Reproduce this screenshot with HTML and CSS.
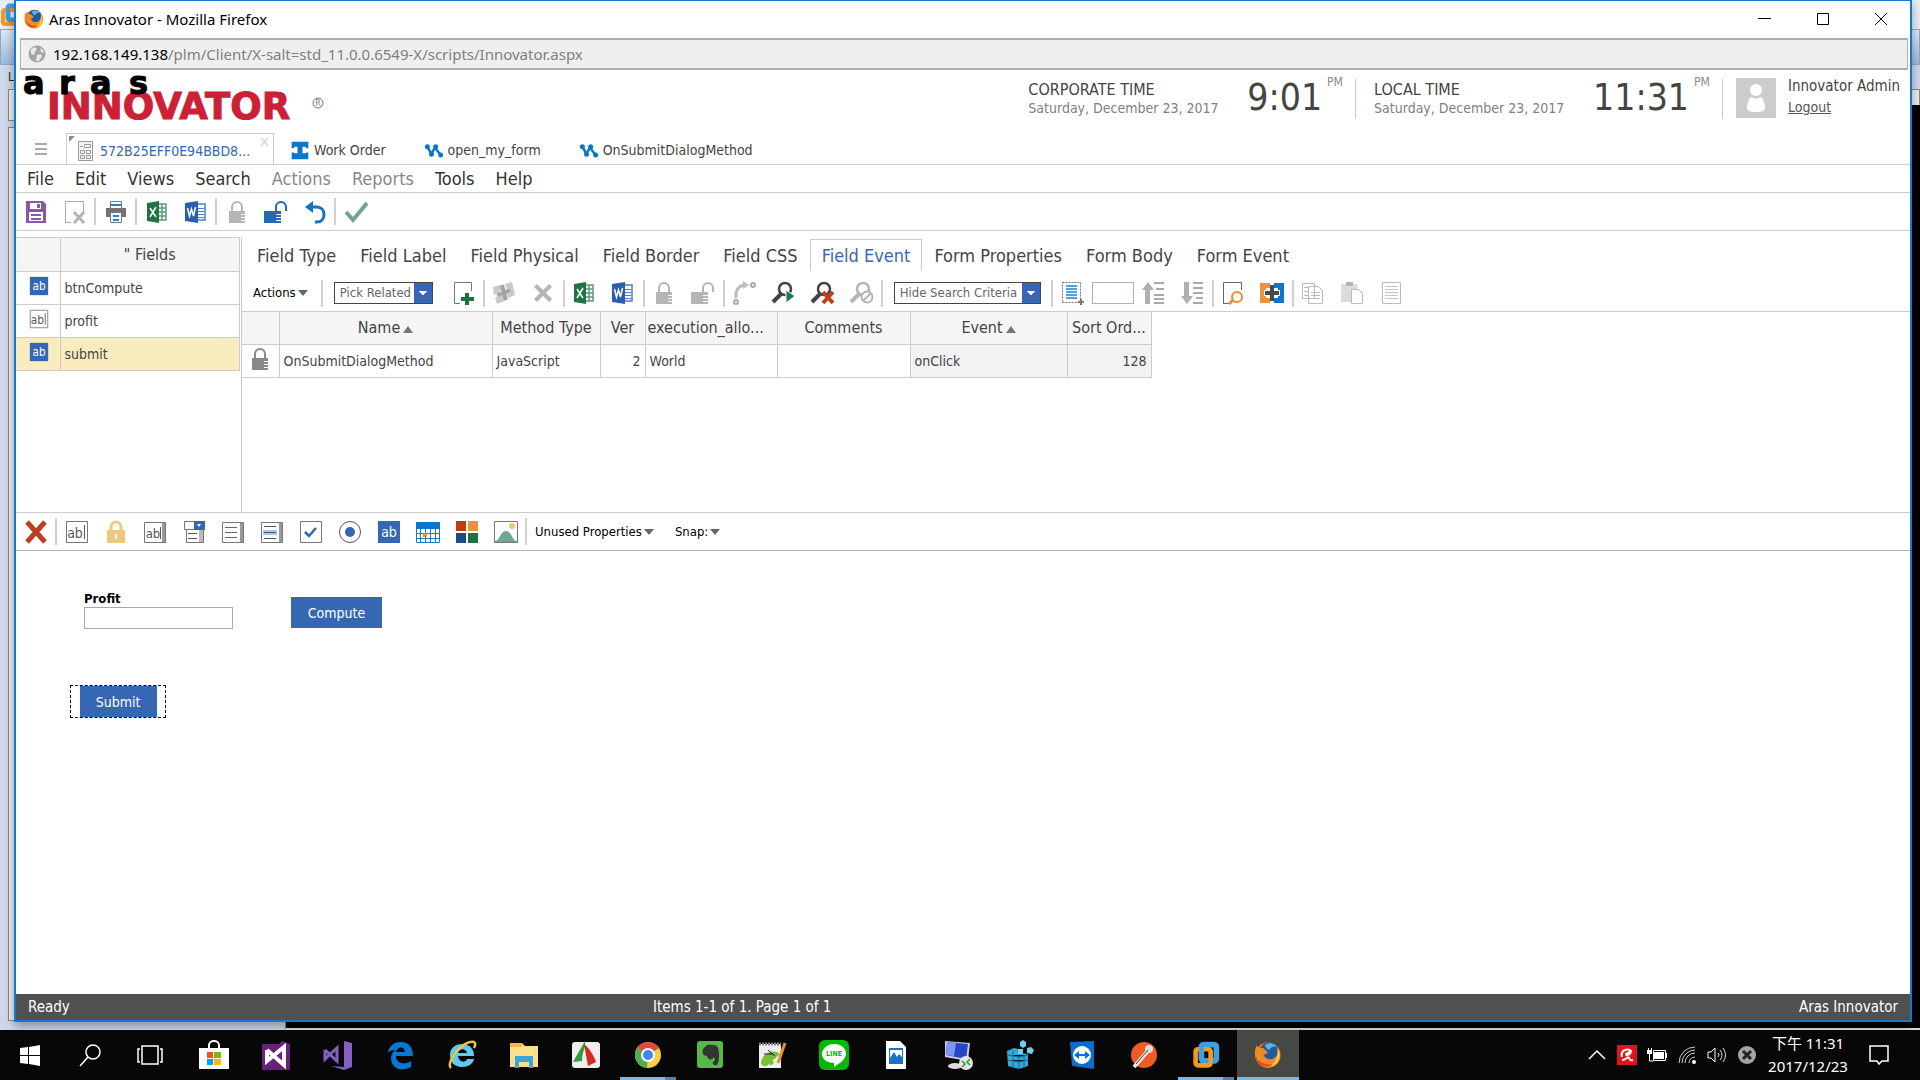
FILE: index.html
```html
<!DOCTYPE html>
<html lang="en">
<head>
<meta charset="utf-8">
<title>Aras Innovator</title>
<link rel="stylesheet" href="styles.css">
</head>
<body>
<svg class="defs" aria-hidden="true">
  <symbol id="i-save" viewBox="0 0 24 24"><path fill="#8a57a6" d="M2 1h17l3 3v19H2z"/><path fill="#fff" d="M6 3h11v6H6zM5 12h14v9H5z"/><path fill="#8a57a6" d="M13 4h3v4h-3zM7 14h10v2H7zM7 18h10v2H7z"/></symbol>
  <symbol id="i-docx" viewBox="0 0 24 24"><path fill="none" stroke="#aaa" d="M20.500 12V1.500h-18v21H8"/><path stroke="#b5b5b5" stroke-width="3" d="M11 12l10 11M21 12L11 23"/></symbol>
  <symbol id="i-print" viewBox="0 0 24 24"><path fill="#fff" stroke="#777" d="M6.500 1.500h11v7h-11z"/><path stroke="#1a8ad4" stroke-width="2" d="M7 5h10"/><path fill="#737373" d="M2 8h20v9H2z"/><path fill="#fff" stroke="#777" d="M6.500 12.500h11v10h-11z"/><path stroke="#1a8ad4" stroke-width="2" d="M9 16h6M9 20h6"/></symbol>
  <symbol id="i-excel" viewBox="0 0 24 24"><path fill="none" stroke="#5d9b78" stroke-width="1.500" d="M13 4h8v16h-8M13 8h8M13 12h8M13 16h8M17 4v16"/><path fill="#217346" d="M2 3l12-2v22L2 21z"/><path stroke="#fff" stroke-width="1.500" d="M5 8l6 9M11 7l-6 10"/></symbol>
  <symbol id="i-word" viewBox="0 0 24 24"><path fill="#fff" stroke="#4e7dc4" stroke-width="1.500" d="M13 4h8v16h-8z"/><path stroke="#4e7dc4" d="M14 8.500h6M14 11.500h6M14 14.500h6M14 17.500h6"/><path fill="#2b5eab" d="M1 3l13-2v22L1 21z"/><path fill="none" stroke="#fff" stroke-width="1.500" d="M3.500 8l2 8 2-7 2 7 2-9"/></symbol>
  <symbol id="i-lock" viewBox="0 0 24 24"><path fill="none" stroke="currentColor" stroke-width="2" d="M7 12V7a5 5 0 0 1 10 0v5"/><path fill="currentColor" d="M4 11h16v3h-4v1h4v2h-4v1h4v2h-4v1h4v2H4z"/></symbol>
  <symbol id="i-unlock" viewBox="0 0 24 24"><path fill="none" stroke="currentColor" stroke-width="2" d="M12 12V7a5 5 0 0 1 10 0v4"/><path fill="currentColor" d="M0 11h17v3h-5v1h5v2h-5v1h5v2h-5v1h5v2H0z"/></symbol>
  <symbol id="i-undo" viewBox="0 0 24 24"><path fill="none" stroke="#0f74c6" stroke-width="3" d="M6 7h8c4 0 7 3 7 7.500S18 22 14 22h-2"/><path fill="#0f74c6" d="M2 7l8-6v12z"/></symbol>
  <symbol id="i-check" viewBox="0 0 24 24"><path fill="none" stroke="#6fa592" stroke-width="4" d="M2 12l7 8L23 3"/></symbol>
  <symbol id="i-form" viewBox="0 0 20 20"><path fill="#f4f4f4" stroke="#999" d="M2.500.5h14v19h-14z"/><path fill="none" stroke="#999" d="M8.500 3.500h6v3h-6zM4.500 9.500h4v3h-4zM10.500 9.500h4v3h-4zM4.500 14.500h4v3h-4zM10.500 14.500h4v3h-4zM4 5.500h3"/></symbol>
  <symbol id="i-work" viewBox="0 0 24 24"><path fill="#0b77cb" d="M2 2h20v8h-3V8h-4v8h4v-1h3v8H2v-8h3v1h4V8H5v2H2z"/></symbol>
  <symbol id="i-method" viewBox="0 0 24 24"><path fill="none" stroke="#0b77cb" stroke-width="3" d="M4 8l5 9 4-8 7 9"/><g fill="#0b77cb"><circle cx="4" cy="8" r="3"/><circle cx="9" cy="17" r="3"/><circle cx="14" cy="8" r="3"/><circle cx="20" cy="18" r="3"/></g></symbol>
  <symbol id="i-ab" viewBox="0 0 24 24"><path fill="#3567b3" d="M1 1h22v22H1z"/><text x="12" y="17" text-anchor="middle" font-size="14" fill="#fff">ab</text></symbol>
  <symbol id="i-abl" viewBox="0 0 24 24"><path fill="#fff" stroke="#777" d="M1.500 1.500h21v21h-21z"/><text x="10" y="18" text-anchor="middle" font-size="14" fill="#555">ab</text><path stroke="#555" d="M19.500 5v14"/></symbol>
  <symbol id="i-area" viewBox="0 0 24 24"><path fill="#fff" stroke="#777" d="M1.500 2.500h21v20h-21z"/><text x="10" y="18" text-anchor="middle" font-size="13" fill="#555">ab</text><path fill="#999" d="M19 3h3v19h-3z"/><path stroke="#555" d="M17.500 7v12"/></symbol>
  <symbol id="i-goldlock" viewBox="0 0 24 24"><path fill="none" stroke="#efcb82" stroke-width="3" d="M7 12V7a5 5 0 0 1 10 0v5"/><path fill="#efc77c" d="M3 10h18v13H3z"/><path fill="#fff" d="M11 14h2v5h-2z"/></symbol>
  <symbol id="i-combo" viewBox="0 0 24 24"><path fill="#fff" stroke="#777" d="M2.500 1.500h19v8h-19zM4.500 9.500h17v13h-17z"/><path fill="#3567b3" d="M12 1h11v9H12z"/><path fill="#fff" d="M15 4h4l-2 3z"/><path fill="#bbb" d="M17 10h4v12h-4z"/><path stroke="#555" d="M6 13.500h9M6 18.500h9"/></symbol>
  <symbol id="i-list" viewBox="0 0 24 24"><path fill="#fff" stroke="#777" d="M1.500 2.500h21v20h-21z"/><path fill="#999" d="M19 3h3v19h-3z"/><path stroke="#666" d="M4 7.500h12M4 12.500h12M4 17.500h12"/></symbol>
  <symbol id="i-mlist" viewBox="0 0 24 24"><path fill="#fff" stroke="#777" d="M1.500 2.500h21v20h-21z"/><path fill="#999" d="M19 3h3v19h-3z"/><path fill="#a9c6ef" d="M3 10h14v5H3z"/><path stroke="#555" d="M4 6.500h12M4 12.500h12M4 18.500h12"/></symbol>
  <symbol id="i-tick" viewBox="0 0 24 24"><path fill="#fff" stroke="#777" d="M1.500 1.500h21v21h-21z"/><path fill="none" stroke="#3567b3" stroke-width="2.500" d="M6 12l4 4 7-8"/></symbol>
  <symbol id="i-radio" viewBox="0 0 24 24"><circle cx="12" cy="12" r="10.500" fill="#fff" stroke="#555"/><circle cx="12" cy="12" r="5" fill="#3567b3"/></symbol>
  <symbol id="i-cal" viewBox="0 0 24 24"><path fill="#fff" stroke="#1a7cc8" d="M.5 2.500h23v20H.5z"/><path fill="#0b77cb" d="M0 2h24v7H0z"/><path stroke="#1a7cc8" d="M0 13.500h24M0 18.500h24M4.500 9v13M9.500 9v13M14.500 9v13M19.500 9v13"/><path fill="#ec8b35" d="M7 13h4v4H7z"/></symbol>
  <symbol id="i-color" viewBox="0 0 24 24"><path fill="#bd3d16" d="M1 1h10v10H1z"/><path fill="#ec9042" d="M13 1h10v10H13z"/><path fill="#184d8a" d="M1 13h10v10H1z"/><path fill="#1f7044" d="M13 13h10v10H13z"/></symbol>
  <symbol id="i-image" viewBox="0 0 24 24"><path fill="#fff" stroke="#777" d="M.5 1.500h23v21H.5z"/><circle cx="18" cy="6" r="3" fill="#f0c672"/><path fill="#6fa592" d="M1 21c5 0 5-10 11-10s6 10 11 10v1H1z"/></symbol>
  <symbol id="i-redx" viewBox="0 0 24 24"><path stroke="#bd3d21" stroke-width="5" d="M3 2l18 20M21 2L3 22"/></symbol>
  <symbol id="i-greyx" viewBox="0 0 24 24"><path stroke="#b5b5b5" stroke-width="5" d="M3 3l18 18M21 3L3 21"/></symbol>
  <symbol id="i-newdoc" viewBox="0 0 24 24"><path fill="none" stroke="#777" d="M20.500 10V1.500h-17v21H9"/><path stroke="#1f7044" stroke-width="4" d="M16 12v12M10 18h13"/></symbol>
  <symbol id="i-puzzle" viewBox="0 0 24 24"><path fill="#c9c9c9" d="M1 6l7-2 2 5-3 2 1 4 3-1 2 6-8 3-2-6 2-1-1-3-2 1z"/><path fill="#c9c9c9" d="M13 3l7-2 3 13-7 3-1-5 3-1-1-4-2 1z"/><path stroke="#a3a3a3" stroke-width="4" d="M10 4l4 15M6 14l12-5"/></symbol>
  <symbol id="i-route" viewBox="0 0 24 24"><path fill="none" stroke="#bbb" stroke-width="3" d="M4 17C3 9 7 5 12 4"/><path fill="#bbb" d="M11 0l6 4-6 4z"/><g fill="none" stroke="#aaa" stroke-width="2"><circle cx="4" cy="21" r="2"/><circle cx="21" cy="4" r="2"/></g></symbol>
  <symbol id="i-mag" viewBox="0 0 24 24"><circle cx="14" cy="8" r="6" fill="none" stroke="currentColor" stroke-width="2.500"/><path stroke="currentColor" stroke-width="4" d="M10 13l-8 8"/></symbol>
  <symbol id="i-magrun" viewBox="0 0 24 24"><use href="#i-mag"/><path fill="#1f7a48" stroke="#fff" d="M15 9l9 6-9 7z"/></symbol>
  <symbol id="i-magx" viewBox="0 0 24 24"><use href="#i-mag"/><path stroke="#c53d17" stroke-width="4" d="M13 11l10 11M23 11L13 22"/></symbol>
  <symbol id="i-magno" viewBox="0 0 24 24"><use href="#i-mag"/><circle cx="18" cy="16" r="5.500" fill="#fff" stroke="#b3b3b3" stroke-width="2"/><path stroke="#b3b3b3" stroke-width="2" d="M14 20l8-8"/></symbol>
  <symbol id="i-selall" viewBox="0 0 24 24"><path fill="none" stroke="#777" stroke-dasharray="2 1" d="M2.500 1.500h18v20h-18z"/><path stroke="#4ba3e3" stroke-width="2" d="M6 5h11M6 8h11M6 11h11M6 14h11M6 17h11"/><path stroke="#777" stroke-width="2" d="M21 18v6M18 21h6"/></symbol>
  <symbol id="i-up" viewBox="0 0 24 24"><path fill="#b0b0b0" d="M7 1l6 8H9v14H4V9H1z"/><path stroke="#aaa" stroke-width="2" d="M13 2h10M15 8h8M13 14h10M13 18h10M13 22h10"/></symbol>
  <symbol id="i-down" viewBox="0 0 24 24"><path fill="#b0b0b0" d="M7 23l6-8H9V1H4v14H1z"/><path stroke="#aaa" stroke-width="2" d="M13 2h10M13 7h10M13 12h10M16 17h7M13 22h10"/></symbol>
  <symbol id="i-preview" viewBox="0 0 24 24"><path fill="none" stroke="#666" d="M20.500 9V1.500h-18v21H8"/><circle cx="16" cy="16" r="5" fill="none" stroke="#ec8b35" stroke-width="2"/><path stroke="#ec8b35" stroke-width="3" d="M12 19l-4 4"/></symbol>
  <symbol id="i-merge" viewBox="0 0 24 24"><path fill="#ec9042" d="M0 2h10v5H6v10h4v5H0z"/><path fill="#0b77cb" d="M14 2h10v20H14v-5h4V7h-4z"/><path stroke="#fff" stroke-width="6" d="M4 12h16"/><path stroke="#4a4a4a" stroke-width="4" d="M5 12h14M12 4v16"/></symbol>
  <symbol id="i-copy" viewBox="0 0 24 24"><path fill="#fff" stroke="#bbb" d="M1.500 2.500h12v15h-12zM7.500 5.500h10l4 4v13h-14z"/><path stroke="#bbb" d="M3 6.500h4M3 10.500h4M3 14.500h4M10 11.500h9M10 14.500h9M10 17.500h9"/></symbol>
  <symbol id="i-paste" viewBox="0 0 24 24"><path fill="#dcdcdc" d="M1 3h16v18H1z"/><path fill="#b5b5b5" d="M6 1h7v4H6z"/><path fill="#fff" stroke="#bbb" d="M11.500 8.500h7l4 4v10h-11z"/></symbol>
  <symbol id="i-page" viewBox="0 0 24 24"><path fill="#fff" stroke="#bbb" d="M3.500 1.500h18v21h-18z"/><path stroke="#c5c5c5" d="M6 5.500h13M6 8.500h13M6 11.500h13M6 14.500h13M6 17.500h13"/></symbol>
  <symbol id="i-firefox" viewBox="0 0 24 24"><circle cx="12" cy="12" r="11" fill="#e66b1b"/><circle cx="13" cy="9" r="8" fill="#1f5aa0"/><path fill="#5db2e8" d="M9 4c2-3 8-3 11 1-3-1-6 0-7 3z"/><path fill="#f08a24" d="M2 4c2 2 4 2 6 2l4 4-4 2c2 4 7 5 10 2 4-3 4-6 3-9 3 9 0 18-9 18C3 23-2 13 2 4z"/><path fill="#dd4f1c" d="M1 12c2 6 8 9 15 8-4 4-14 3-15-8z"/><path fill="#ffc83d" d="M20 5c5 8 1 16-6 17 5-4 7-9 6-17z"/></symbol>
  <symbol id="i-vmware" viewBox="0 0 24 24"><rect x="8" y="3" width="13" height="14" rx="2" fill="none" stroke="#3f9fe0" stroke-width="5"/><rect x="3" y="7" width="13" height="14" rx="2" fill="none" stroke="#f59a1c" stroke-width="4"/><path fill="none" stroke="#3f9fe0" stroke-width="4" d="M8 12V5a2 2 0 0 1 2-2h9"/></symbol>
</svg>

<main class="desktop">
  <div class="back-window" aria-hidden="true">
    <div class="back-title"><svg class="ico"><use href="#i-vmware"/></svg></div>
    <div class="back-tools"></div>
    <div class="back-body"><span>L</span><div class="back-box"></div><div class="back-box back-tall"></div></div>
    <div class="back-screen"></div>
  </div>

  <section class="window">
    <header class="titlebar">
      <svg class="ico app-ico"><use href="#i-firefox"/></svg>
      <h1>Aras Innovator - Mozilla Firefox</h1>
      <button class="win-btn" aria-label="Minimize"><svg viewBox="0 0 14 14"><path d="M0 6.500h13"/></svg></button>
      <button class="win-btn" aria-label="Maximize"><svg viewBox="0 0 14 14"><path d="M1.500 1.500h11v11h-11z"/></svg></button>
      <button class="win-btn" aria-label="Close"><svg viewBox="0 0 14 14"><path d="M1 1l12 12M13 1L1 13"/></svg></button>
    </header>
    <div class="urlbar">
      <svg class="globe" viewBox="0 0 18 18"><circle cx="9" cy="9" r="8.500" fill="#a5a5a5"/><path fill="#e8e8e8" d="M3 4l4-2 2 2-2 3-1 3-3-1zM9 10l4-1 1 2-3 5-3 0zM12 3l3 2 1 3-3-1z"/></svg>
      <span><b>192.168.149.138</b>/plm/Client/X-salt=std_11.0.0.6549-X/scripts/Innovator.aspx</span>
    </div>

    <div class="banner">
      <svg class="logo" viewBox="0 0 310 52" role="img" aria-label="aras Innovator">
        <g font-weight="700">
          <text x="24" y="49" font-size="37" fill="#cc2036" stroke="#cc2036">INNOVATOR</text>
          <g fill="#000" stroke="#000" font-size="32"><text x="0" y="24">a</text><text x="36" y="24">r</text><text x="67" y="24">a</text><text x="106" y="24">s</text></g>
        </g>
        <circle cx="295" cy="33" r="5" fill="none" stroke="#777"/><text x="295" y="36" font-size="8" text-anchor="middle" fill="#777">R</text>
      </svg>
      <div class="clock"><div><p class="zone">CORPORATE TIME</p><p class="date">Saturday, December 23, 2017</p></div><time>9:01</time><sup>PM</sup></div>
      <div class="clock"><div><p class="zone">LOCAL TIME</p><p class="date">Saturday, December 23, 2017</p></div><time>11:31</time><sup>PM</sup></div>
      <div class="user">
        <svg class="avatar" viewBox="0 0 40 40"><path fill="#ccc" d="M0 0h40v40H0z"/><ellipse cx="20" cy="12" rx="6" ry="6" fill="#fff"/><path fill="#fff" d="M15 19l5 2 5-2c3 3 4 7 4 11 0 3-4 4-9 4s-9-1-9-4c0-4 1-8 4-11z"/></svg>
        <div><p>Innovator Admin</p><a href="#">Logout</a></div>
      </div>
    </div>

    <nav class="doc-tabs">
      <button class="burger" aria-label="Menu"><svg viewBox="0 0 12 12"><path d="M0 1h12M0 6h12M0 11h12"/></svg></button>
      <button class="doc-tab active"><svg class="ico small"><use href="#i-form"/></svg>572B25EFF0E94BBD8...<span class="tab-x">×</span></button>
      <button class="doc-tab"><svg class="ico small"><use href="#i-work"/></svg>Work Order</button>
      <button class="doc-tab"><svg class="ico small"><use href="#i-method"/></svg>open_my_form</button>
      <button class="doc-tab"><svg class="ico small"><use href="#i-method"/></svg>OnSubmitDialogMethod</button>
    </nav>
    <nav class="menu">
      <button>File</button><button>Edit</button><button>Views</button><button>Search</button><button class="off">Actions</button><button class="off">Reports</button><button>Tools</button><button>Help</button>
    </nav>
    <div class="toolbar main-tools">
      <button aria-label="Save"><svg class="ico"><use href="#i-save"/></svg></button>
      <button aria-label="Delete"><svg class="ico"><use href="#i-docx"/></svg></button><i></i>
      <button aria-label="Print"><svg class="ico"><use href="#i-print"/></svg></button><i></i>
      <button aria-label="Excel"><svg class="ico"><use href="#i-excel"/></svg></button>
      <button aria-label="Word"><svg class="ico"><use href="#i-word"/></svg></button><i></i>
      <button class="dim" aria-label="Lock"><svg class="ico"><use href="#i-lock"/></svg></button>
      <button class="blue" aria-label="Unlock"><svg class="ico"><use href="#i-unlock"/></svg></button>
      <button aria-label="Undo"><svg class="ico"><use href="#i-undo"/></svg></button><i></i>
      <button aria-label="Complete"><svg class="ico"><use href="#i-check"/></svg></button>
    </div>

    <div class="editor">
      <aside class="fields">
        <table>
          <thead><tr><th class="c-ico"></th><th>" Fields</th></tr></thead>
          <tbody>
            <tr><td class="c-ico"><svg class="ico small"><use href="#i-ab"/></svg></td><td>btnCompute</td></tr>
            <tr><td class="c-ico"><svg class="ico small"><use href="#i-abl"/></svg></td><td>profit</td></tr>
            <tr class="sel"><td class="c-ico"><svg class="ico small"><use href="#i-ab"/></svg></td><td>submit</td></tr>
          </tbody>
        </table>
      </aside>
      <section class="detail">
        <nav class="prop-tabs">
          <button>Field Type</button><button>Field Label</button><button>Field Physical</button><button>Field Border</button><button>Field CSS</button><button class="active">Field Event</button><button>Form Properties</button><button>Form Body</button><button>Form Event</button>
        </nav>
        <div class="toolbar grid-tools">
          <button class="drop">Actions<span class="tri"></span></button><i></i>
          <select class="pick" aria-label="Pick Related"><option>Pick Related</option></select>
          <button aria-label="New"><svg class="ico"><use href="#i-newdoc"/></svg></button><i></i>
          <button aria-label="Pick"><svg class="ico"><use href="#i-puzzle"/></svg></button>
          <button aria-label="Remove"><svg class="ico small"><use href="#i-greyx"/></svg></button><i></i>
          <button aria-label="Excel"><svg class="ico"><use href="#i-excel"/></svg></button>
          <button aria-label="Word"><svg class="ico"><use href="#i-word"/></svg></button><i></i>
          <button class="dim" aria-label="Lock"><svg class="ico"><use href="#i-lock"/></svg></button>
          <button class="dim" aria-label="Unlock"><svg class="ico"><use href="#i-unlock"/></svg></button><i></i>
          <button aria-label="Promote"><svg class="ico"><use href="#i-route"/></svg></button>
          <button class="dark" aria-label="Run search"><svg class="ico"><use href="#i-magrun"/></svg></button>
          <button class="dark" aria-label="Clear search"><svg class="ico"><use href="#i-magx"/></svg></button>
          <button class="dim" aria-label="Stop search"><svg class="ico"><use href="#i-magno"/></svg></button><i></i>
          <select class="hide-crit" aria-label="Search mode"><option>Hide Search Criteria</option></select><i></i>
          <button aria-label="Select all"><svg class="ico"><use href="#i-selall"/></svg></button>
          <input class="page-size" type="text" aria-label="Page size">
          <button aria-label="Previous page"><svg class="ico"><use href="#i-up"/></svg></button>
          <button aria-label="Next page"><svg class="ico"><use href="#i-down"/></svg></button><i></i>
          <button aria-label="Preview"><svg class="ico"><use href="#i-preview"/></svg></button>
          <button aria-label="Merge"><svg class="ico"><use href="#i-merge"/></svg></button><i></i>
          <button aria-label="Copy"><svg class="ico"><use href="#i-copy"/></svg></button>
          <button aria-label="Paste"><svg class="ico"><use href="#i-paste"/></svg></button>
          <button aria-label="Properties"><svg class="ico"><use href="#i-page"/></svg></button>
        </div>
        <table class="events">
          <colgroup><col class="w-lock"><col class="w-name"><col class="w-type"><col class="w-ver"><col class="w-exec"><col class="w-com"><col class="w-event"><col class="w-sort"></colgroup>
          <thead><tr><th></th><th>Name<span class="asc"></span></th><th>Method Type</th><th>Ver</th><th class="left">execution_allo...</th><th>Comments</th><th>Event<span class="asc"></span></th><th>Sort Ord...</th></tr></thead>
          <tbody><tr><td class="lockcell"><svg class="ico"><use href="#i-lock"/></svg></td><td>OnSubmitDialogMethod</td><td>JavaScript</td><td class="num">2</td><td>World</td><td></td><td class="ro">onClick</td><td class="ro num">128</td></tr></tbody>
        </table>
      </section>
    </div>

    <div class="toolbar form-tools">
      <button aria-label="Delete"><svg class="ico"><use href="#i-redx"/></svg></button><i></i>
      <button aria-label="Text"><svg class="ico"><use href="#i-abl"/></svg></button>
      <button aria-label="Password"><svg class="ico"><use href="#i-goldlock"/></svg></button>
      <button aria-label="Text area"><svg class="ico"><use href="#i-area"/></svg></button>
      <button aria-label="Dropdown"><svg class="ico"><use href="#i-combo"/></svg></button>
      <button aria-label="List box"><svg class="ico"><use href="#i-list"/></svg></button>
      <button aria-label="Multi list"><svg class="ico"><use href="#i-mlist"/></svg></button>
      <button aria-label="Checkbox"><svg class="ico"><use href="#i-tick"/></svg></button>
      <button aria-label="Radio"><svg class="ico"><use href="#i-radio"/></svg></button>
      <button aria-label="Button"><svg class="ico"><use href="#i-ab"/></svg></button>
      <button aria-label="Date"><svg class="ico"><use href="#i-cal"/></svg></button>
      <button aria-label="Color"><svg class="ico"><use href="#i-color"/></svg></button>
      <button aria-label="Image"><svg class="ico"><use href="#i-image"/></svg></button><i></i>
      <button class="drop">Unused Properties<span class="tri"></span></button>
      <button class="drop">Snap:<span class="tri"></span></button>
    </div>

    <div class="canvas">
      <div class="profit"><label for="profit">Profit</label><input id="profit" type="text"></div>
      <button class="action compute">Compute</button>
      <div class="selected"><button class="action">Submit</button></div>
    </div>

    <footer class="status"><span>Ready</span><span>Items 1-1 of 1. Page 1 of 1</span><span>Aras Innovator</span></footer>
  </section>
</main>

<footer class="taskbar">
  <button aria-label="Start"><svg viewBox="0 0 30 30"><path fill="#fff" d="M5 8l8-1v8H5zM14 7l11-2v10H14zM5 16h8v8l-8-1zM14 16h11v10l-11-2z"/></svg></button>
  <button aria-label="Search"><svg viewBox="0 0 30 30"><g fill="none" stroke="#fff" stroke-width="1.500"><circle cx="18" cy="12" r="7"/><path d="M13 17l-8 9"/></g></svg></button>
  <button aria-label="Task view"><svg viewBox="0 0 30 30"><path fill="none" stroke="#fff" stroke-width="1.500" d="M7 6h16v18H7zM5 9H3v13h2M25 9h2v13h-2"/></svg></button>
  <div class="apps">
    <button aria-label="Store"><svg viewBox="0 0 30 30"><path fill="none" stroke="#fff" stroke-width="2" d="M10 9V5a5 4 0 0 1 10 0v4"/><path fill="#fff" d="M0 8h30v21H0z"/><path fill="#f25022" d="M8 12h6v6H8z"/><path fill="#7fba00" d="M15 12h7v6h-7z"/><path fill="#00a4ef" d="M8 19h6v6H8z"/><path fill="#ffb900" d="M15 19h7v6h-7z"/></svg></button>
    <button aria-label="Visual Studio"><svg viewBox="0 0 30 30"><path fill="#68217a" d="M1 4h17l3-3 8 3v26H1z"/><path fill="none" stroke="#fff" stroke-width="4" d="M6 10v11l17-14v18L6 10"/></svg></button>
    <button aria-label="Visual Studio installer"><svg viewBox="0 0 30 30"><path fill="#865fc5" d="M21 1l8 2v24l-8 3-13-4 13 1z"/><path fill="none" stroke="#865fc5" stroke-width="3" d="M2 10v9L14 8v13L2 10"/></svg></button>
    <button aria-label="Edge"><svg viewBox="0 0 30 30"><path fill="#0078d7" d="M3 13C4 5 10 2 16 2c8 0 12 6 12 14H11c0 8 9 9 15 5v6c-9 5-20 2-20-9 0-3 2-7 5-8-4 0-7 1-8 3zm8-1h9c0-6-8-6-9 0z"/></svg></button>
    <button aria-label="Internet Explorer"><svg viewBox="0 0 30 30"><path fill="#5ecbf3" d="M15 4c8 0 12 5 12 12H11c1 7 8 7 9 3h7c-1 5-6 8-12 8C7 27 3 22 3 15S8 4 15 4zm-4 9h9c-1-5-8-5-9 0z"/><path fill="none" stroke="#f5c330" stroke-width="2.500" d="M4 28C-2 23 16-1 27 2c2 1 1 4 0 6"/></svg></button>
    <button aria-label="Files"><svg viewBox="0 0 30 30"><path fill="#ffe08a" d="M1 3h12l3 3h13v21H1z"/><path fill="#f0b93a" d="M1 3h12v4H1z"/><path fill="#37a7e0" d="M6 16h18v12h-4v-6H10v6H6z"/></svg></button>
    <button aria-label="Capture"><svg viewBox="0 0 30 30"><rect x="1" y="2" width="28" height="26" rx="3" fill="#eee"/><path fill="#2f9e3f" d="M2 22L14 1v6c-2 5-3 9-3 14z"/><path fill="#d32b20" d="M13 4c6 5 10 12 12 18l-8 4z"/></svg></button>
    <button class="running" aria-label="Chrome"><svg viewBox="0 0 30 30"><circle cx="15" cy="15" r="13" fill="#f9d13e"/><path fill="#dd4b3e" d="M15 15L4 8a13 13 0 0 1 22 0z"/><path fill="#4fae52" d="M15 15l-1 13A13 13 0 0 1 4 8z"/><circle cx="15" cy="15" r="6" fill="#4286f4" stroke="#fff" stroke-width="2"/></svg></button>
    <button aria-label="Evernote"><svg viewBox="0 0 30 30"><rect x="2" y="1" width="26" height="27" rx="3" fill="#56b847"/><path fill="#333" d="M8 9l4-4c5-1 11 0 11 3 2 6 1 14-1 17-3 1-5-1-4-3l2-2-1-3c-3 4-6 3-7-1-4 0-5-3-4-7z"/></svg></button>
    <button aria-label="Notepad++"><svg viewBox="0 0 30 30"><path fill="#eee" d="M2 4h22v24H2z"/><path stroke="#888" stroke-dasharray="2 1" stroke-width="3" d="M2 4h22"/><path fill="#7bbf35" d="M4 24c0-12 16-16 19-9-4 0-3 4-8 5 4 2 0 7-3 4-3 3-5 3-8 0z"/><path stroke="#222" d="M7 14h9M11 10l7 6"/><path stroke="#e5941f" stroke-width="3" d="M28 3l-7 20"/></svg></button>
    <button aria-label="LINE"><svg viewBox="0 0 30 30"><rect width="30" height="30" rx="6" fill="#00b900"/><path fill="#fff" d="M15 4c7 0 12 4 12 10 0 5-6 9-12 13v-4C8 23 3 19 3 14S8 4 15 4z"/><text x="15" y="16" font-size="7" font-weight="700" text-anchor="middle" fill="#00b900">LINE</text></svg></button>
    <button aria-label="Pictures"><svg viewBox="0 0 30 30"><path fill="#fff" d="M5 1h14l6 6v22H5z"/><path fill="#1673c5" d="M8 8h14v16H8z"/><path fill="#fff" d="M9 10h12v7l-3-3-2 3-3-5-4 6z"/></svg></button>
    <button aria-label="Remote desktop"><svg viewBox="0 0 30 30"><path fill="#ccd" d="M2 1l25 2-2 18-23-4z"/><path fill="#2747c9" d="M4 2l21 2-2 15-20-4z"/><path fill="#7c98f0" d="M4 2l9 1-2 13-8-1z"/><ellipse cx="12" cy="26" rx="7" ry="3" fill="#ddd"/><circle cx="23" cy="23" r="7" fill="#e5e5e5"/><path fill="none" stroke="#259b3d" stroke-width="1.500" d="M19 21l3 3-3 3M27 19l-3 3 3 3"/></svg></button>
    <button aria-label="Registry"><svg viewBox="0 0 30 30"><path fill="#35a8d8" d="M2 11l7-3 4 1v4l10 1v12l-9 3-11-3z"/><path fill="#6bd0f2" d="M15 2l3-2 3 2v4l-3 2-3-2zM22 8l4-1 3 3-2 4-5-1zM13 9l5 0 0 5-5 0z"/><path stroke="#136c9a" d="M3 15l11 2 9-2M3 20l11 2 9-2M8 10v18M14 16v13M19 15v13"/></svg></button>
    <button aria-label="TeamViewer"><svg viewBox="0 0 30 30"><path fill="#0a6ed1" d="M3 2l24-1v28L5 26z"/><circle cx="15" cy="15" r="9" fill="#fff"/><path fill="#0a6ed1" d="M7 15l5-4v3h6v-3l5 4-5 4v-3h-6v3z"/></svg></button>
    <button aria-label="Postman"><svg viewBox="0 0 30 30"><circle cx="15" cy="15" r="13" fill="#ef5b25"/><path stroke="#e8e8e8" stroke-width="4" d="M18 12L5 27"/><circle cx="20" cy="9" r="4" fill="#ddd"/><path stroke="#444" d="M7 24l12-14"/></svg></button>
    <button class="running" aria-label="VMware"><svg viewBox="-1 -1 26 26"><use href="#i-vmware" width="24" height="24"/></svg></button>
    <button class="current" aria-label="Firefox"><svg viewBox="-1 -1 26 26"><use href="#i-firefox" width="24" height="24"/></svg></button>
  </div>
  <div class="tray">
    <svg class="chev" viewBox="0 0 20 20"><path fill="none" stroke="#fff" stroke-width="1.500" d="M2 14l8-8 8 8"/></svg>
    <svg viewBox="0 0 20 20"><path fill="#e3131b" d="M0 0h20v20H0z"/><path fill="none" stroke="#fff" stroke-width="2" d="M5 12C3 5 11 3 14 6l-5 3c0 3 5 0 5-3M5 15c4 0 6-4 7-2s1 3 4 2"/></svg>
    <svg class="batt" viewBox="0 0 20 20"><path fill="none" stroke="#fff" d="M6.500 5.500h12v10h-12zM19.500 8v5M2.500 7v9h4"/><path fill="#fff" d="M7 7h10v7H7zM0 5h5v4H0zM1 3h1v2H1zM4 3h1v2H4z"/></svg>
    <svg class="wifi" viewBox="0 0 20 20"><circle cx="17" cy="17" r="2" fill="#fff"/><g fill="none" stroke="#fff"><path d="M12 18a6 6 0 0 1 6-6M8 18A10 10 0 0 1 18 8M5 18A13 13 0 0 1 18 5M2 18A16 16 0 0 1 18 2" opacity=".8"/></g></svg>
    <svg class="sound" viewBox="0 0 20 20"><path fill="none" stroke="#fff" d="M1 7h3l4-4v14l-4-4H1z"/><path fill="none" stroke="#ddd" d="M11 8q2 2 0 4M13 5q4 5 0 10M16 3q5 7 0 14"/></svg>
    <svg viewBox="0 0 20 20"><circle cx="10" cy="10" r="9" fill="#a5a5a5"/><path stroke="#222" stroke-width="3" d="M6 6l8 8M14 6l-8 8"/></svg>
    <time class="tray-time"><span>下午 11:31</span><span>2017/12/23</span></time>
    <svg class="note" viewBox="0 0 20 20"><path fill="none" stroke="#fff" stroke-width="1.500" d="M1 1h18v15h-6l-3 3-2-3H1z"/></svg>
  </div>
</footer>
</body>
</html>
```
FILE: styles.css
```css
* { box-sizing: border-box; margin: 0; }
body {
  height: 100vh;
  display: flex;
  flex-direction: column;
  overflow: hidden;
  color: #444;
  background: #000;
  font: 15px/20px "DejaVu Sans Condensed", "Noto Sans CJK TC", sans-serif;
}
button, input, select { font: inherit; color: inherit; }
button { border: 0; padding: 0; background: none; }
p { white-space: nowrap; }
.defs { position: absolute; width: 0; height: 0; }
.ico { width: 24px; height: 24px; flex: none; display: block; }
.small { width: 20px; height: 20px; }

/* desktop and the window behind */
.desktop { flex: 1; position: relative; overflow: hidden; background: #cfd8ea; }
.back-window { position: absolute; inset: 0; }
.back-title { height: 29px; padding-top: 3px; background: #e8eef5; }
.back-tools { height: 36px; background: linear-gradient(#dce8f6, #9fb9dc); border: 1px solid #8ea6c6; }
.back-body { padding-left: 8px; font-size: 12px; line-height: 24px; color: #222; }
.back-box { height: 32px; border: 1px solid #888; background: #eee; margin-bottom: 6px; }
.back-tall { height: 894px; }
.back-screen { position: absolute; left: 285px; right: 0; top: 105px; bottom: 0; background: #000; border-bottom: 2px solid #ddd; border-left: 1px solid #888; }

.window {
  position: absolute;
  inset: 0 8px 8px 14px;
  display: flex;
  flex-direction: column;
  background: #fff;
  border: 2px solid #1478cc;
  border-top-width: 1px;
  box-shadow: 0 4px 10px rgba(0, 0, 0, .35);
}
.titlebar { height: 37px; flex: none; display: flex; align-items: center; padding: 0 0 1px 8px; color: #000; }
.app-ico { width: 20px; height: 20px; }
.titlebar h1 { flex: 1; margin-left: 5px; font: 15px/20px "Noto Sans", sans-serif; }
.win-btn { width: 58px; height: 36px; display: grid; place-items: center; }
.win-btn svg { width: 14px; height: 14px; fill: none; stroke: #000; }
.urlbar {
  height: 32px; flex: none; display: flex; align-items: center; gap: 7px;
  margin-right: 2px; margin-left: 4px; padding-left: 7px;
  background: #efefef; border: 1px solid #a9adb4; border-width: 2px 1px;
  font: 15px/20px "Noto Sans", sans-serif; color: #808080;
}
.urlbar b { font-weight: 400; color: #000; }
.globe { width: 18px; height: 18px; }

.banner { height: 63px; flex: none; display: flex; align-items: flex-start; padding: 0 12px 0 7px; }
.logo { width: 310px; height: 52px; margin-right: auto; font-family: "DejaVu Sans", sans-serif; }
.clock { display: flex; align-items: flex-start; height: 40px; margin: 9px 0 0 18px; padding-right: 10px; border-right: 1px solid #ccc; }
.clock > div { width: 187px; padding-top: 2px; font-size: 14px; line-height: 18px; }
.clock .zone { font-size: 16px; }
.clock > div + time { margin-left: 32px; font-size: 37px; line-height: 38px; }
.clock sup { width: 18px; margin: -6px 0 0 5px; font-size: 12px; line-height: 18px; color: #888; }
.date { color: #808080; }
.user { display: flex; gap: 12px; margin: 8px 0 0 13px; font-size: 15px; }
.user a { display: block; margin-top: 3px; font-size: 14px; color: #555; }
.user p { line-height: 16px; }
.user > div { width: 110px; }
.avatar { width: 40px; height: 40px; }

.doc-tabs { height: 32px; flex: none; display: flex; align-items: stretch; border-bottom: 1px solid #ccc; font-size: 14px; }
.burger { width: 50px; display: grid; place-items: center; }
.burger svg { width: 12px; height: 12px; stroke: #aaa; stroke-width: 2; }
.doc-tab { display: flex; align-items: center; gap: 4px; padding: 3px 22px 0 16px; }
.doc-tab.active { position: relative; width: 208px; padding: 3px 0 0 9px; border: 1px solid #ccc; border-bottom: 0; color: #3567b3; }
.doc-tab.active::before { content: ""; position: absolute; left: 2px; top: 2px; border: 3px solid; border-color: #888 transparent transparent #888; }
.tab-x { position: absolute; right: 3px; top: -2px; color: #c5d5ec; font-size: 15px; }

.menu { height: 28px; flex: none; display: flex; gap: 21px; padding-left: 11px; border-bottom: 1px solid #ccc; font-size: 18px; color: #333; }
.menu .off { color: #888; }

.toolbar { display: flex; align-items: center; flex: none; }
.toolbar > button { width: 39px; height: 34px; display: flex; align-items: center; justify-content: center; }
.toolbar > i { width: 2px; height: 27px; flex: none; background: #d0d0d0; }
.dim { color: #b5b5b5; }
.blue { color: #2469b5; }
.dark { color: #444; }
.toolbar > .drop { width: auto; gap: 2px; font-size: 13px; color: #000; }
.tri { border: 5px solid transparent; border-top: 6px solid #666; border-bottom: 0; }
.main-tools { height: 38px; border-bottom: 1px solid #ccc; }

.editor { height: 281px; flex: none; display: flex; padding-top: 6px; }
.fields { width: 226px; border-right: 1px solid #ccc; }
table { border-collapse: collapse; table-layout: fixed; }
th { font-weight: 400; background: #f5f5f5; }
th, td { height: 33px; padding: 0 4px; border: 1px solid #ccc; white-space: nowrap; overflow: hidden; font-size: 14px; }
th { font-size: 16px; }
.fields table { width: 224px; border-left: 0; }
.fields td, .fields th { border-left: 0; }
.fields th { height: 34px; }
.fields .c-ico { width: 44px; }
.c-ico .ico { margin: -4px 0 0 9px; }
.sel td { background: #f8ecbd; }
.detail { flex: 1; min-width: 0; }
.prop-tabs { display: flex; height: 34px; padding: 2px 0 0 3px; font-size: 18px; }
.prop-tabs button { padding: 0 11px; height: 32px; border: 1px solid transparent; border-bottom: 0; white-space: nowrap; }
.prop-tabs .active { border-color: #ccc; color: #3567b3; }
.grid-tools { height: 41px; padding: 4px 0 0 11px; border-bottom: 1px solid #ccc; }
.grid-tools .drop + i { margin: 0 11px 0 13px; }
select {
  appearance: none; height: 22px; padding: 0 5px; border: 1px solid #444; border-radius: 0; font-size: 13px; color: #666;
  background:
    linear-gradient(to bottom left, #fff 50%, transparent 0) right 9px top 8px / 4px 5px no-repeat,
    linear-gradient(to bottom right, #fff 50%, transparent 0) right 5px top 8px / 4px 5px no-repeat,
    linear-gradient(#3567b3, #3567b3) right / 18px 100% no-repeat, #fff;
}
.pick { width: 99px; margin-right: 11px; }
.hide-crit { width: 147px; margin: 0 10px 0 11px; }
.page-size { width: 42px; height: 22px; border: 1px solid #aab2bd; }

.events { width: 909px; margin-top: -1px; }
.events th:first-child, .events td:first-child { border-left: 0; }
.w-lock { width: 37px; } .w-name { width: 213px; } .w-type { width: 108px; } .w-ver { width: 45px; }
.w-exec { width: 132px; } .w-com { width: 133px; } .w-event { width: 157px; } .w-sort { width: 84px; }
.asc { display: inline-block; margin-left: 3px; border: 5px solid transparent; border-bottom: 7px solid #777; border-top: 0; }
.lockcell { color: #888; }
.lockcell .ico { margin: -4px auto 0; }
.num { text-align: right; }
.ro { background: #f2f2f2; }
.events th { padding: 0 2px; }
.events .left { text-align: left; }

.form-tools { height: 39px; border-top: 1px solid #ccc; border-bottom: 1px solid #b5b5b5; }
.form-tools .drop { margin: 0 13px 0 8px; }
.canvas { position: relative; flex: 1; }
.profit { position: absolute; left: 68px; top: 39px; }
.profit label { display: block; height: 17px; font-size: 13px; line-height: 17px; font-weight: 700; color: #000; }
.profit input { display: block; width: 149px; height: 22px; border: 1px solid #aaa; }
.action { height: 31px; background: #3567b3; color: #fff; font-size: 14px; padding: 0 16px; }
.compute { position: absolute; left: 275px; top: 46px; width: 91px; }
.selected { position: absolute; left: 54px; top: 134px; width: 96px; border: 1px dashed #000; display: flex; justify-content: center; }
.selected .action { width: 77px; }

.status { height: 26px; flex: none; display: grid; grid-template-columns: 625px 1fr auto; align-items: center; padding: 0 12px; background: #505050; color: #fff; font-size: 15px; line-height: 24px; }

/* taskbar */
.taskbar { height: 50px; flex: none; display: flex; background: #060706; color: #fff; }
.taskbar button { width: 60px; height: 50px; flex: none; display: grid; place-items: center; }
.taskbar button svg { width: 30px; height: 30px; }
.apps { display: flex; margin-left: 3px; }
.taskbar .apps button { width: 62px; border-bottom: 3px solid transparent; padding-top: 2px; }
.taskbar .running { border-image: linear-gradient(90deg, transparent 6px, #76b9ed 6px, #76b9ed 46px, #5184ac 46px, #5184ac 56px, transparent 56px) 3; }
.taskbar .apps .current { background: #454843; border-color: #76b9ed; }
.tray { flex: 1; display: flex; align-items: center; justify-content: flex-end; gap: 10px; padding-right: 31px; }
.tray svg { width: 20px; height: 20px; }
.tray-time { width: 82px; display: flex; flex-direction: column; align-items: center; white-space: nowrap; font: 15px/23px "Noto Sans", "Noto Sans CJK TC", sans-serif; }
.tray .note { margin-left: 10px; }
```
